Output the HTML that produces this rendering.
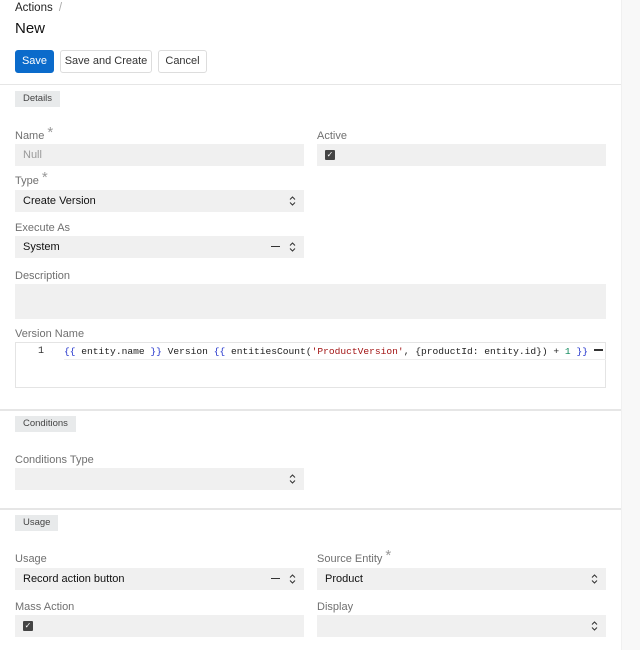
<!DOCTYPE html>
<html><head><style>
*{box-sizing:border-box;margin:0;padding:0}
body{width:640px;height:650px;overflow:hidden;background:#fff;font-family:"Liberation Sans",sans-serif;position:relative;color:#222}
.strip{position:absolute;left:621px;top:0;width:19px;height:650px;background:#f8f8f8;border-left:1px solid #f0f0f0}
.a{position:absolute}
.lbl{position:absolute;font-size:11px;color:#707070;line-height:13px}
.star{color:#999;font-size:15px;position:absolute;top:-5px;margin-left:3px;line-height:15px}
.in{position:absolute;background:#f0f0f0;height:22px;font-size:11px;padding:5px 8px;color:#111}
.btn{position:absolute;top:50px;height:23px;border:1px solid #ddd;border-radius:3px;font-size:11px;line-height:21px;text-align:center;background:#fff;color:#333}
.tag{position:absolute;left:15px;height:16px;background:#e8eaeb;font-size:9.5px;line-height:16px;padding:0 8px;color:#444}
.hr{position:absolute;left:0;width:621px;height:2px;background:#e6e6e6}
.arr{position:absolute;right:8px;top:5px;width:7px;height:12px}
.dash{position:absolute;right:24px;top:10px;width:9px;height:1px;background:#333}
.cb{position:absolute;left:8px;top:6px;width:10px;height:10px;background:#444;border-radius:1px;color:#fff;font-size:8px;line-height:10px;text-align:center}
</style></head><body>
<div class="strip"></div>
<div class="a" style="left:15px;top:2px;font-size:11.5px;color:#222;line-height:13px">Actions <span style="color:#aaa;margin-left:3px">/</span></div>
<div class="a" style="left:15px;top:20px;font-size:15px;color:#111;line-height:17px">New</div>
<div class="btn" style="left:15px;width:39px;background:#0b6bcb;border-color:#0b6bcb;color:#fff">Save</div>
<div class="btn" style="left:60px;width:92px">Save and Create</div>
<div class="btn" style="left:158px;width:49px">Cancel</div>
<div class="hr" style="top:84px;height:1px"></div>
<div class="tag" style="top:91px">Details</div>

<div class="lbl" style="left:15px;top:130px">Name<span class="star">*</span></div>
<div class="in" style="left:15px;top:144px;width:289px;color:#999">Null</div>
<div class="lbl" style="left:317px;top:130px">Active</div>
<div class="in" style="left:317px;top:144px;width:289px"><div class="cb">✓</div></div>

<div class="lbl" style="left:15px;top:175px">Type<span class="star">*</span></div>
<div class="in" style="left:15px;top:190px;width:289px">Create Version<svg class="arr" viewBox="0 0 7 12"><path d="M1 4.5L3.5 2L6 4.5M1 7.5L3.5 10L6 7.5" fill="none" stroke="#333" stroke-width="1"/></svg></div>

<div class="lbl" style="left:15px;top:222px">Execute As</div>
<div class="in" style="left:15px;top:236px;width:289px">System<div class="dash"></div><svg class="arr" viewBox="0 0 7 12"><path d="M1 4.5L3.5 2L6 4.5M1 7.5L3.5 10L6 7.5" fill="none" stroke="#333" stroke-width="1"/></svg></div>

<div class="lbl" style="left:15px;top:270px">Description</div>
<div class="in" style="left:15px;top:284px;width:591px;height:35px"></div>

<div class="lbl" style="left:15px;top:328px">Version Name</div>
<div class="a" style="left:15px;top:342px;width:591px;height:46px;border:1px solid #e4e4e4;background:#fff">
<div class="a" style="left:22px;top:3px;font-family:'Liberation Mono',monospace;font-size:10px;color:#333">1</div>
<div class="a" style="left:48px;top:2px;width:542px;height:15px;border-bottom:1px solid #eee"></div>
<div class="a" style="left:48px;top:3px;font-family:'Liberation Mono',monospace;font-size:9.6px;white-space:nowrap;color:#222"><span style="color:#2233cc">{{</span> entity.name <span style="color:#2233cc">}}</span> Version <span style="color:#2233cc">{{</span> entitiesCount(<span style="color:#a31515">'ProductVersion'</span>, {productId: entity.id}) + <span style="color:#098658">1</span> <span style="color:#2233cc">}}</span></div>
<div class="a" style="left:578px;top:6px;width:9px;height:2px;background:#333"></div>
</div>

<div class="hr" style="top:409px"></div>
<div class="tag" style="top:416px">Conditions</div>
<div class="lbl" style="left:15px;top:454px">Conditions Type</div>
<div class="in" style="left:15px;top:468px;width:289px"><svg class="arr" viewBox="0 0 7 12"><path d="M1 4.5L3.5 2L6 4.5M1 7.5L3.5 10L6 7.5" fill="none" stroke="#333" stroke-width="1"/></svg></div>

<div class="hr" style="top:508px"></div>
<div class="tag" style="top:515px">Usage</div>
<div class="lbl" style="left:15px;top:553px">Usage</div>
<div class="in" style="left:15px;top:568px;width:289px">Record action button<div class="dash"></div><svg class="arr" viewBox="0 0 7 12"><path d="M1 4.5L3.5 2L6 4.5M1 7.5L3.5 10L6 7.5" fill="none" stroke="#333" stroke-width="1"/></svg></div>
<div class="lbl" style="left:317px;top:553px">Source Entity<span class="star">*</span></div>
<div class="in" style="left:317px;top:568px;width:289px">Product<svg class="arr" viewBox="0 0 7 12"><path d="M1 4.5L3.5 2L6 4.5M1 7.5L3.5 10L6 7.5" fill="none" stroke="#333" stroke-width="1"/></svg></div>
<div class="lbl" style="left:15px;top:601px">Mass Action</div>
<div class="in" style="left:15px;top:615px;width:289px"><div class="cb">✓</div></div>
<div class="lbl" style="left:317px;top:601px">Display</div>
<div class="in" style="left:317px;top:615px;width:289px"><svg class="arr" viewBox="0 0 7 12"><path d="M1 4.5L3.5 2L6 4.5M1 7.5L3.5 10L6 7.5" fill="none" stroke="#333" stroke-width="1"/></svg></div>
</body></html>
